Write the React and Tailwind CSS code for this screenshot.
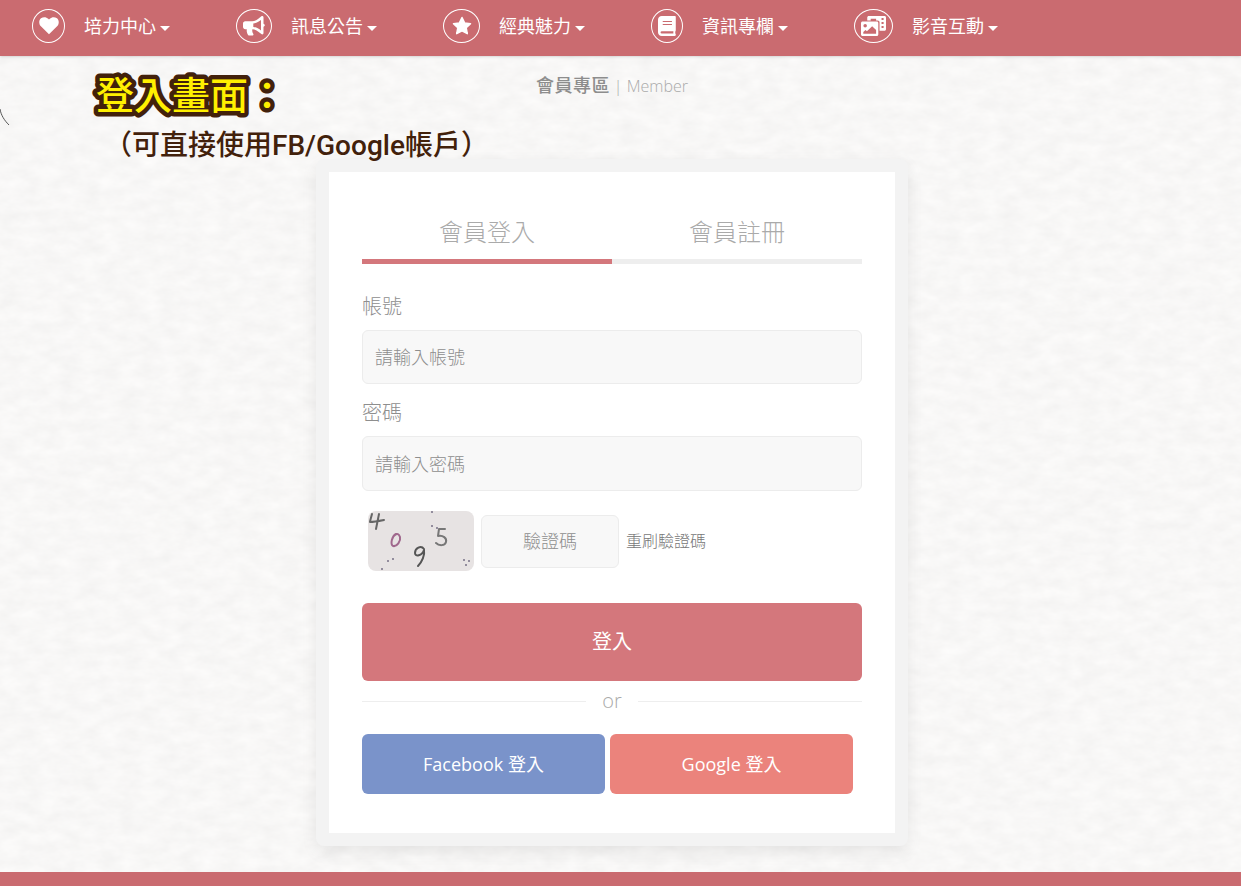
import React, { useState } from 'react';

function HeartIcon() {
  return (
    <svg width="20" height="18" viewBox="0 0 20 18" fill="currentColor" aria-hidden="true">
      <path d="M10 17.2 1.9 9.2C-.4 6.8-.2 3 2 1.3 4.300-.5 7.400-.1 9.200 1.700L10 2.600l.8-.9c1.800-1.800 4.900-2.200 7.200-.4 2.200 1.700 2.400 5.500.1 7.900L10 17.200z" />
    </svg>
  );
}

function HornIcon() {
  return (
    <svg width="22" height="20" viewBox="0 0 22 20" fill="currentColor" aria-hidden="true">
      <path fillRule="evenodd" d="M20.500 7.700V1.300C20.500.7 20 0 19.200 0c-.3 0-.6.1-.8.3L15 3.100c-1.700 1.300-3.800 2.100-6 2.100H2.200C1 5.200 0 6.200 0 7.400v3.700c0 1.200 1 2.200 2.200 2.200h1.600c-.3 2 .2 4 1.300 5.700.3.400.7.600 1.100.6h3.100c1 0 1.500-1.100.9-1.900-.9-1.200-1.200-2.800-.8-4.400 2.100.1 4 .8 5.600 2.100l3.400 2.700c.2.200.5.300.8.300.8 0 1.300-.7 1.300-1.300v-6.400c.7-.4 1.300-1 1.300-1.500s-.5-1.100-1.300-1.500zM18 14.500l-1.500-1.200c-1.800-1.400-4-2.300-6.200-2.400V7.500c2.300-.2 4.400-1 6.200-2.400L18 3.900v10.600z" />
    </svg>
  );
}

function StarIcon() {
  return (
    <svg width="20" height="20" viewBox="0 0 20 20" fill="currentColor" stroke="currentColor" strokeWidth="1.500" strokeLinejoin="round" aria-hidden="true">
      <path d="m10 1.500 2.600 5.400 5.900.8-4.300 4.100 1.100 5.900-5.300-2.800-5.300 2.800 1.100-5.900-4.300-4.100 5.900-.8z" />
    </svg>
  );
}

function BookIcon() {
  return (
    <svg width="18" height="20" viewBox="0 0 16 20" preserveAspectRatio="none" fill="currentColor" aria-hidden="true">
      <path fillRule="evenodd" d="M15.800 14V1c0-.6-.4-1-1-1H3.300C1.500 0 0 1.700 0 3.700v12.500C0 18.300 1.500 20 3.300 20h11.500c.6 0 1-.4 1-.9v-.7c0-.3-.1-.5-.3-.7-.2-.6-.2-1.900 0-2.500.2-.3.3-.7.3-1.200zM4.200 5h8.200v1.100H4.200V5zm0 3h8.200v1.100H4.200V8zm9.500 9.500H3.400c-1.500 0-1.500-2.300 0-2.300h10.300c-.1.700-.1 1.600 0 2.300z" />
    </svg>
  );
}

function MediaIcon() {
  return (
    <svg width="25" height="20" viewBox="0 0 24 20" preserveAspectRatio="none" fill="currentColor" aria-hidden="true">
      <path fillRule="evenodd" d="M7.500 0h15c.9 0 1.500.6 1.500 1.500v11.800c0 .9-.6 1.500-1.500 1.500h-4.700V6.200c0-1-.8-1.800-1.800-1.800h-1.500V2.700H9.300v1.700H6V1.500C6 .6 6.600 0 7.500 0zm12.200 2v2h2V2h-2zm0 4v2h2V6h-2zm0 4v2h2v-2h-2z" />
      <path fillRule="evenodd" d="M1.500 5.500h13.700c.8 0 1.400.7 1.400 1.500v11.500c0 .8-.6 1.500-1.400 1.500H1.500C.7 20 0 19.300 0 18.500V7c0-.8.7-1.500 1.500-1.500zM4 8a1.700 1.700 0 1 0 0 3.400A1.700 1.700 0 0 0 4 8zm-1.800 9.700h12.300v-3.800l-3.800-3.700-5 5-1.400-1.300-2.100 2v1.800z" />
    </svg>
  );
}

const menu = [
  { label: '培力中心', Icon: HeartIcon, width: 'w-[33px]' },
  { label: '訊息公告', Icon: HornIcon, width: 'w-9' },
  { label: '經典魅力', Icon: StarIcon, width: 'w-[37px]' },
  { label: '資訊專欄', Icon: BookIcon, width: 'w-8' },
  { label: '影音互動', Icon: MediaIcon, width: 'w-[39px]' },
];

function NavBar() {
  return (
    <nav className="flex h-14 shrink-0 items-center gap-[66px] bg-[#ca6b70] pr-4 pb-1 pl-8 text-white shadow-sm">
      {menu.map(({ label, Icon, width }) => (
        <button key={label} type="button" className="flex shrink-0 items-center gap-[19px] text-lg leading-6 font-normal">
          <span className={`flex h-[34px] items-center justify-center rounded-[50%] border border-white ${width}`}>
            <Icon />
          </span>
          <span className="flex items-center gap-1 whitespace-nowrap">
            {label}
            <span className="mt-1 border-x-5 border-t-5 border-x-transparent border-t-white" />
          </span>
        </button>
      ))}
    </nav>
  );
}

// uneven off-white paper behind the whole page
function PaperTexture() {
  return (
    <svg className="absolute inset-0 -z-10 h-full w-full" aria-hidden="true">
      <filter id="paper" x="0" y="0" width="100%" height="100%" colorInterpolationFilters="sRGB">
        <feTurbulence type="fractalNoise" baseFrequency="0.05 0.09" numOctaves="4" seed="8" />
        <feColorMatrix values="0.045 0 0 0 0.949  0.045 0 0 0 0.946  0.045 0 0 0 0.943  0 0 0 0 1" />
      </filter>
      <rect width="100%" height="100%" filter="url(#paper)" />
    </svg>
  );
}

function Captcha() {
  return (
    <svg width="106" height="60" viewBox="0 0 106 60" className="shrink-0 rounded-lg bg-[#e7e3e3]" role="img" aria-label="4095">
      <g fill="none" strokeLinecap="round" strokeLinejoin="round" strokeWidth="2">
        <path stroke="#666" d="M4 3C3 7 2 10 2 11c4 0 9-1 14-2M11 3c-1 5-2 10-3 15" />
        <path stroke="#a0688d" d="M28 23c-4 2-6 10-3 12 4 1 8-5 7-9-1-3-3-4-5-2" />
        <path stroke="#555" d="M56 38c-3-4-9-1-9 4 0 4 7 3 9-3 1 5-2 12-6 16" />
        <path stroke="#777" d="M77 18h-6l-1 7c5-1 9 2 8 6-1 4-7 4-10 1" />
      </g>
      <g fill="#777086">
        <circle cx="64" cy="1" r="1" />
        <circle cx="64" cy="15" r="1" />
        <circle cx="69" cy="17" r="1" />
        <circle cx="20" cy="50" r="1" />
        <circle cx="25" cy="48" r="1" />
        <circle cx="14" cy="58" r="1" />
        <circle cx="96" cy="49" r="1" />
        <circle cx="101" cy="50" r="1" />
        <circle cx="98" cy="54" r="1" />
      </g>
    </svg>
  );
}

const inputStyle = 'rounded-md border border-[#ececec] bg-[#f8f8f8] text-lg text-[#777] placeholder:text-[#8e8e8e] focus:outline-none focus:ring-2 focus:ring-[#d4777c]';

export default function App() {
  const [tab, setTab] = useState('login');

  return (
    <div
      lang="zh-Hant"
      className="relative isolate flex min-h-screen flex-col overflow-hidden bg-[#f8f7f6] font-['Open_Sans','Noto_Sans_CJK_TC',sans-serif] font-light"
    >
      <PaperTexture />
      <NavBar />

      {/* Notes laid over the page */}
      <div className="absolute top-[61px] left-24 font-['Noto_Sans_CJK_TC',sans-serif] text-[#42210b]">
        <svg width="200" height="64" className="overflow-visible" fill="#fff000" stroke="#42210b" strokeWidth="9" strokeLinejoin="round">
          <text x="0" y="48" className="text-[38px] font-medium [paint-order:stroke]">登入畫面：</text>
        </svg>
        <p className="pl-2 text-[28px] leading-9 font-medium">
          （可直接使用<span className="font-['Roboto',sans-serif]">FB/Google</span>帳戶）
        </p>
      </div>
      <svg className="absolute top-[108px] left-0" width="10" height="18" fill="none" stroke="#555" aria-hidden="true">
        <path d="M0 1c1 6 4 11 9 16" />
      </svg>

      <main className="flex grow flex-col items-center pr-[17px]">
        <h1 className="mt-4 flex items-center text-lg leading-[27px] font-medium tracking-wide text-[#8d8d8d]">
          會員專區
          <small className="ml-1 text-base font-light tracking-normal text-[#aaa]">| Member</small>
        </h1>

        <section className="mt-15 mb-[26px] w-full max-w-[592px] rounded-lg border-[13px] border-[#f3f3f3] bg-white px-[33px] pt-8 pb-[39px] shadow-[0_6px_16px_rgba(0,0,0,0.08)]">
          <div className="flex text-2xl leading-9 text-[#aaa]">
            <button type="button" onClick={() => setTab('login')}
              className={`flex-1 border-b-5 py-[9px] pt-2.5 ${tab === 'login' ? 'border-[#d4777c]' : 'border-[#eee]'}`}>
              會員登入
            </button>
            <button type="button" onClick={() => setTab('register')}
              className={`flex-1 border-b-5 py-[9px] pt-2.5 ${tab === 'register' ? 'border-[#d4777c]' : 'border-[#eee]'}`}>
              會員註冊
            </button>
          </div>

          <form onSubmit={(e) => e.preventDefault()} className="pt-7">
            <label htmlFor="account" className="block pb-2 text-xl leading-[30px] text-[#8e8e8e]">帳號</label>
            <input id="account" placeholder="請輸入帳號" className={`h-[54px] w-full px-3 ${inputStyle}`} />
            <label htmlFor="password" className="block pt-3.5 pb-2 text-xl leading-[30px] text-[#8e8e8e]">密碼</label>
            <input id="password" type="password" placeholder="請輸入密碼" className={`h-[55px] w-full px-3 ${inputStyle}`} />

            <div className="flex items-center gap-[7px] pt-5 pl-1.5">
              <Captcha />
              <input aria-label="驗證碼" placeholder="驗證碼" className={`h-[53px] w-[138px] text-center ${inputStyle}`} />
              <button type="button" className="text-base text-[#777]">重刷驗證碼</button>
            </div>

            <button type="submit" className="mt-8 h-[78px] w-full rounded-md bg-[#d4777c] text-xl font-normal text-white">登入</button>

            <div className="flex items-center gap-4 text-xl leading-10 text-[#aaa]">
              <span className="h-px flex-1 bg-[#eee]" />
              or
              <span className="h-px flex-1 bg-[#eee]" />
            </div>

            <div className="mt-[13px] flex gap-[5px] pr-[9px] text-lg font-normal text-white">
              <button type="button" className="h-15 flex-1 rounded-md bg-[#7a93ca]">Facebook 登入</button>
              <button type="button" className="h-15 flex-1 rounded-md bg-[#eb837c]">Google 登入</button>
            </div>
          </form>
        </section>
      </main>

      <footer className="h-3.5 bg-[#ca6b70]" />
    </div>
  );
}
